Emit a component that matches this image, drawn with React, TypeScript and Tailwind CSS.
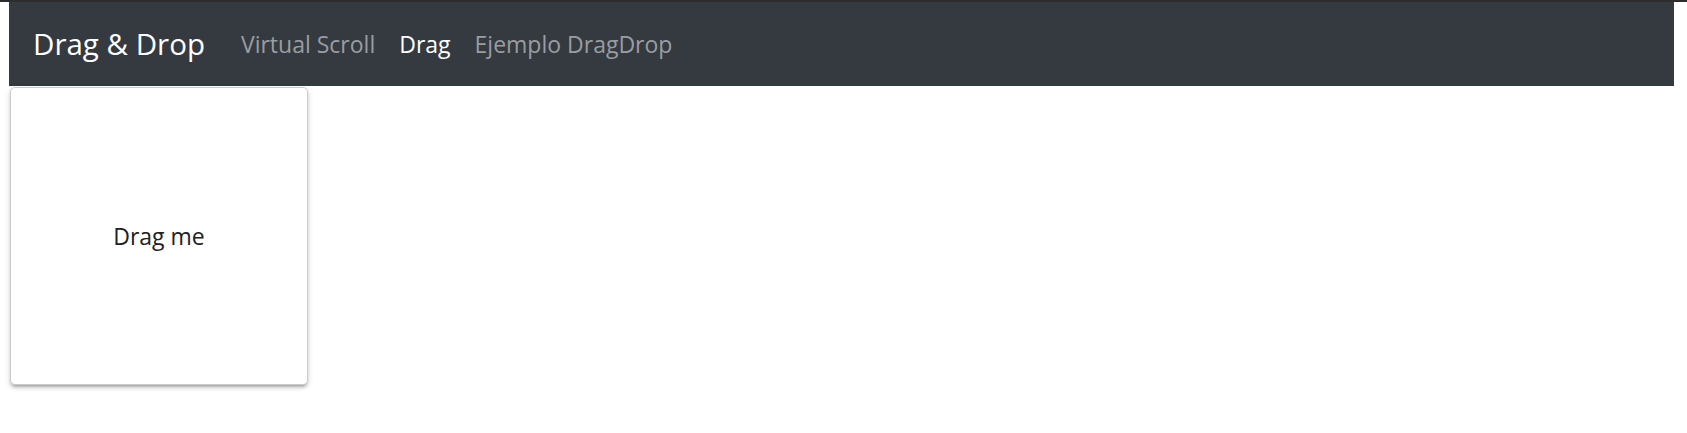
export default function App() {
  return (
    <div className="min-h-screen bg-white font-['Open_Sans',sans-serif]">
      <div className="h-[2px] bg-[#2d2d2d]" />
      <nav className="ml-[9px] mr-[13px] flex h-[84px] items-center bg-[#343a40] px-[24px]">
        <a className="mr-[24px] text-[29.5px] leading-none text-white" href="#">
          Drag &amp; Drop
        </a>
        <div className="flex items-center text-[23px] leading-none">
          <a className="px-[12px] text-[#9a9da0]" href="#">
            Virtual Scroll
          </a>
          <a className="px-[12px] text-white" href="#">
            Drag
          </a>
          <a className="px-[12px] text-[#9a9da0]" href="#">
            Ejemplo DragDrop
          </a>
        </div>
      </nav>
      <div className="ml-[10px] mt-[1px] flex h-[298px] w-[298px] cursor-move items-center justify-center rounded-[5px] border border-[#ccc] bg-white text-[23px] text-[#212121] shadow-[0_4px_2px_-3px_rgba(0,0,0,0.2),0_3px_3px_0_rgba(0,0,0,0.14),0_2px_7px_0_rgba(0,0,0,0.12)]">
        Drag me
      </div>
    </div>
  );
}
